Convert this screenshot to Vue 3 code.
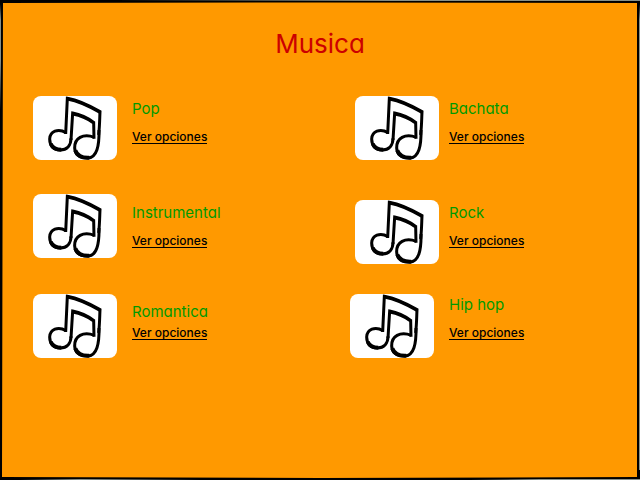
<script setup>
const rows = [
  {
    id: 'first',
    genres: [
      { name: 'Pop', id: 'pop' },
      { name: 'Bachata', id: 'bachata', thumb: 'inset' },
    ],
  },
  {
    id: 'second',
    genres: [
      { name: 'Instrumental', id: 'instrumental' },
      { name: 'Rock', id: 'rock', thumb: 'inset low' },
    ],
  },
  {
    id: 'third',
    genres: [
      { name: 'Romantica', id: 'romantica', text: 'tight' },
      { name: 'Hip hop', id: 'hip-hop' },
    ],
  },
]
</script>

<template>
  <main class="page">
    <svg class="frame" viewBox="0 0 640 480" preserveAspectRatio="none" aria-hidden="true">
      <path class="edge" d="M0 0H640V480H0Z M3 3L2 476L2 477L320 478L637 477L637 3L320 2.500Z" />
      <path class="paper" d="M115 0L640 0V1L400 1Z M0 4L1 20V60L0 110Z M640 4L639 20V470H640Z M20 480L80 479L200 480Z M470 480L540 479H640V480Z" />
    </svg>
    <h1 class="title">Musica</h1>
    <section v-for="row in rows" :key="row.id" class="row" :class="row.id">
      <article v-for="genre in row.genres" :key="genre.id" class="genre">
        <div class="thumb" :class="genre.thumb">
          <svg class="note" viewBox="24 18 252 192" aria-hidden="true">
            <path class="thin" d="M122 132L127 25C160 31 192 46 225 65C224 85 224 108 221 135" />
            <path class="thin" d="M138 150L143 69C164 73 187 83 206 97L207 146" />
            <path class="thin" d="M127 27C160 33 192 48 224 67M143 72C164 76 187 85 205 98" />
            <path class="thin" d="M123 128C99 114 75 124 74 147C74 168 88 180 105 180C127 180 138 165 138 145" />
            <path class="thin" d="M208 142C174 129 148 145 149 174C150 196 166 204 188 204C216 204 223 166 222 120" />
            <path class="thick" d="M77 161C83 175 94 179 109 179M151 181C157 199 172 204 193 203" />
          </svg>
        </div>
        <div class="text" :class="genre.text">
          <h2 :id="genre.id" class="name">{{ genre.name }}</h2>
          <a class="link" href="#" :aria-describedby="genre.id">Ver opciones</a>
        </div>
      </article>
    </section>
  </main>
</template>

<style>
body {
  margin: 0;
}
</style>

<style scoped>
.page {
  position: relative;
  box-sizing: border-box;
  min-height: 100vh;
  padding: 28px 3px;
  background: #ff9900;
  font-family: Inter, "Liberation Sans", sans-serif;
  font-feature-settings: "cv11" 1;
}

.frame {
  position: absolute;
  inset: 0;
  width: 100%;
  height: 100%;
  pointer-events: none;
}

.edge {
  fill: #000;
  fill-rule: evenodd;
}

.paper {
  fill: #889088;
}

.title {
  margin: 0 0 36px;
  color: #cc0000;
  font-size: 26px;
  font-weight: 400;
  line-height: 32px;
  text-align: center;
}

.row {
  display: grid;
  grid-template-columns: 1fr 1fr;
}

.first {
  margin-bottom: 34px;
}

.second {
  margin-bottom: 30px;
}

.genre {
  display: grid;
  grid-template-columns: 99px 1fr;
  padding-left: 30px;
}

.thumb {
  align-self: start;
  width: 84px;
  height: 64px;
  overflow: hidden;
  border-radius: 8px;
  background: #fff;
}

.inset {
  margin-left: 5px;
}

.low {
  margin-top: 6px;
}

.note {
  display: block;
  width: 100%;
  height: 100%;
  fill: none;
  stroke: #000;
  stroke-linejoin: miter;
}

.thin {
  stroke-width: 9px;
}

.thick {
  stroke-width: 12px;
}

.text {
  display: flex;
  flex-direction: column;
  align-items: flex-start;
  justify-content: flex-end;
  gap: 12px;
  padding-bottom: 16px;
}

.third .text {
  padding-bottom: 18px;
}

.text.tight {
  gap: 5px;
}

.name {
  margin: 0;
  color: #009900;
  font-size: 15px;
  font-weight: 400;
  line-height: 18px;
}

.link {
  border-bottom: 1px solid #000;
  color: #000;
  font-size: 12px;
  font-weight: 500;
  line-height: 13px;
  text-decoration: none;
}
</style>
